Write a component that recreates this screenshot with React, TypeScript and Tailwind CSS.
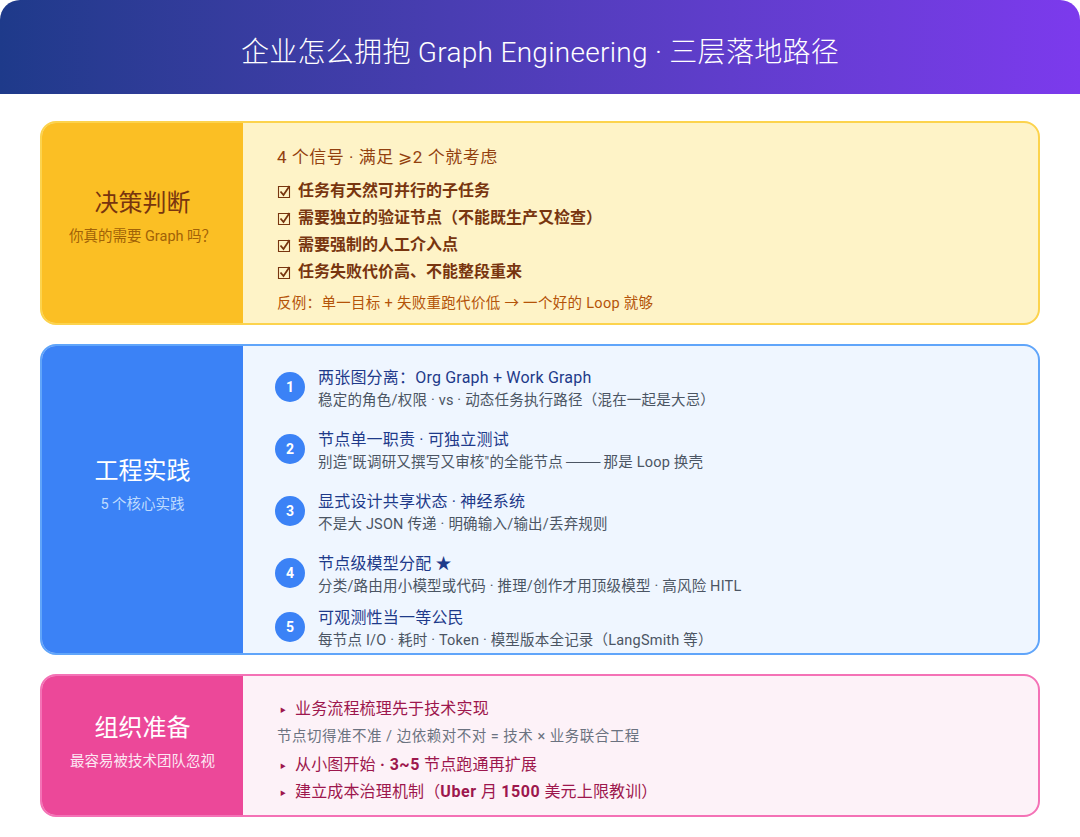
import type { ReactNode } from "react";

const FONT = "font-['Roboto','Noto_Sans_CJK_SC',sans-serif]";

const checks = [
  "任务有天然可并行的子任务",
  "需要独立的验证节点（不能既生产又检查）",
  "需要强制的人工介入点",
  "任务失败代价高、不能整段重来",
];

const practices: { title: string; sub: ReactNode; gap: string }[] = [
  { title: "两张图分离：Org Graph + Work Graph", sub: "稳定的角色/权限 · vs · 动态任务执行路径（混在一起是大忌）", gap: "mb-4" },
  {
    title: "节点单一职责 · 可独立测试",
    sub: (
      <>
        别造"既调研又撰写又审核"的全能节点{" "}
        <span className="mx-[2px] inline-block w-[29px] scale-x-150 text-center font-['Noto_Sans_CJK_SC',sans-serif] leading-none">——</span> 那是 Loop 换壳
      </>
    ),
    gap: "mb-4",
  },
  { title: "显式设计共享状态 · 神经系统", sub: "不是大 JSON 传递 · 明确输入/输出/丢弃规则", gap: "mb-4" },
  { title: "节点级模型分配 ★", sub: "分类/路由用小模型或代码 · 推理/创作才用顶级模型 · 高风险 HITL", gap: "mb-2" },
  { title: "可观测性当一等公民", sub: "每节点 I/O · 耗时 · Token · 模型版本全记录（LangSmith 等）", gap: "" },
];

function Side({ title, sub, className, subClass }: { title: string; sub: string; className: string; subClass: string }) {
  return (
    <div className={`flex w-[201px] shrink-0 flex-col items-center justify-center ${className}`}>
      <div className="text-2xl leading-[34px]">{title}</div>
      <div className={`mt-1.5 text-[14.5px] leading-[21px] ${subClass}`}>{sub}</div>
    </div>
  );
}

function CheckBox() {
  return (
    <svg className="mr-1.5 shrink-0" width="15" height="15" viewBox="0 0 15 15" fill="none" stroke="currentColor">
      <path d="M1.5 2.5h11v11h-11z" strokeWidth="1.1" />
      <path d="M3.5 7.5l3 3.5 6-9" strokeWidth="1.8" />
    </svg>
  );
}

function Bullet({ children }: { children: ReactNode }) {
  return (
    <div className="flex h-[27px] items-center text-base tracking-[0.15px] text-[#9d174d]">
      <span className="ml-[3px] mr-[8px] w-[7px] text-[6px]">▶</span>
      <span>{children}</span>
    </div>
  );
}

export default function App() {
  return (
    <div className={`min-h-[837px] bg-white ${FONT}`}>
      <header className="flex h-[94px] items-center justify-center rounded-t-[20px] bg-gradient-to-r from-[#1e3a8a] to-[#7c3aed] pt-3 text-[28px] font-light tracking-[0.3px] text-white">
        企业怎么拥抱 Graph Engineering · 三层落地路径
      </header>

      <main className="flex flex-col gap-[19px] px-10 pt-[27px]">
        <section className="flex h-[204px] overflow-hidden rounded-2xl border-2 border-[#fcd34d] bg-[#fef3c7]">
          <Side title="决策判断" sub="你真的需要 Graph 吗？" className="bg-[#fbbf24] pb-[14px] text-[#78350f]" subClass="text-[#a16207]" />
          <div className="flex flex-1 flex-col justify-center pl-[34px] pt-3">
            <div className="mb-[9px] text-[17px] leading-6 tracking-[0.5px] text-[#92400e]">4 个信号 · 满足 ⩾2 个就考虑</div>
            {checks.map((c) => (
              <div key={c} className="flex h-[27px] items-center text-base font-semibold text-[#78350f]">
                <CheckBox />
                {c}
              </div>
            ))}
            <div className="mt-2 text-[14.5px] leading-5 tracking-[0.3px] text-[#b45309]">反例：单一目标 + 失败重跑代价低 → 一个好的 Loop 就够</div>
          </div>
        </section>

        <section className="flex h-[311px] overflow-hidden rounded-2xl border-2 border-[#60a5fa] bg-[#eff6ff]">
          <Side title="工程实践" sub="5 个核心实践" className="bg-[#3b82f6] pb-[30px] text-white" subClass="text-[#bfdbfe]" />
          <div className="flex flex-1 flex-col justify-center pl-8 pt-[18px]">
            {practices.map((p, i) => (
              <div key={p.title} className={`flex items-center gap-[13px] ${p.gap}`}>
                <div className="mb-[3px] flex h-[30px] w-[30px] items-center justify-center rounded-full bg-[#3b82f6] text-sm font-bold text-white">
                  {i + 1}
                </div>
                <div>
                  <div className="text-base leading-[24px] tracking-[0.2px] text-[#1e3a8a]">{p.title}</div>
                  <div className="text-[14.5px] leading-[22px] tracking-[0.2px] text-[#4b5563]">{p.sub}</div>
                </div>
              </div>
            ))}
          </div>
        </section>

        <section className="flex h-[143px] overflow-hidden rounded-2xl border-2 border-[#f472b6] bg-[#fdf2f8]">
          <Side title="组织准备" sub="最容易被技术团队忽视" className="bg-[#ec4899] pb-2 text-white" subClass="text-[#fce7f3]" />
          <div className="flex flex-1 flex-col justify-center pl-[34px] pt-[10px]">
            <Bullet>业务流程梳理先于技术实现</Bullet>
            <div className="mb-[3px] mt-[2px] text-[14.5px] leading-6 tracking-[0.5px] text-[#6b7280]">节点切得准不准 / 边依赖对不对 = 技术 × 业务联合工程</div>
            <Bullet>
              从小图开始 <b className="tracking-[0.5px]">· 3~5</b> 节点跑通再扩展
            </Bullet>
            <Bullet>
              建立成本治理机制（<b className="tracking-[0.6px]">Uber</b> 月 <b className="tracking-[0.6px]">1500</b> 美元上限教训）
            </Bullet>
          </div>
        </section>
      </main>
    </div>
  );
}
